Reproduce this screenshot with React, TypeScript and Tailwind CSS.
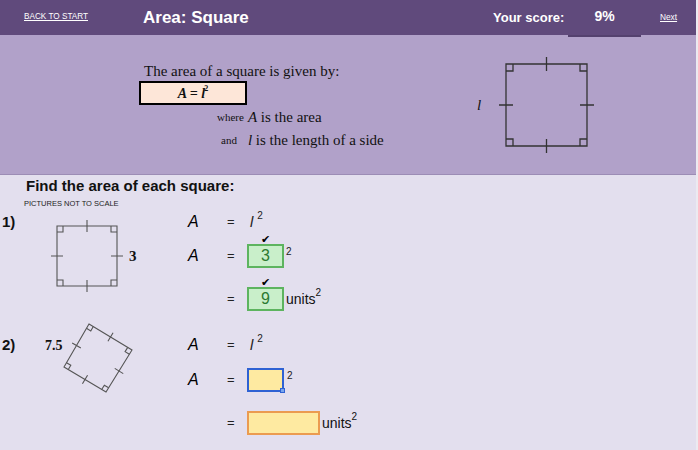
import React from 'react';

type Pt = [number, number];

// square figure with tick marks on each side and right-angle marks in each corner
function SquareFig({ pts, tick, mark, stroke, width }: { pts: Pt[]; tick: number; mark: number; stroke: string; width: number }) {
    const parts: string[] = [];
    pts.forEach((p, i) => {
        const n = pts[(i + 1) % 4];
        const pr = pts[(i + 3) % 4];
        const ux = n[0] - p[0], uy = n[1] - p[1];
        const ul = Math.hypot(ux, uy);
        const vx = pr[0] - p[0], vy = pr[1] - p[1];
        const vl = Math.hypot(vx, vy);
        // side tick
        const mx = (p[0] + n[0]) / 2, my = (p[1] + n[1]) / 2;
        const px = -uy / ul, py = ux / ul;
        parts.push(`M${mx - px * tick},${my - py * tick}L${mx + px * tick},${my + py * tick}`);
        // corner mark
        const a: Pt = [p[0] + (ux / ul) * mark, p[1] + (uy / ul) * mark];
        const b: Pt = [a[0] + (vx / vl) * mark, a[1] + (vy / vl) * mark];
        const c: Pt = [p[0] + (vx / vl) * mark, p[1] + (vy / vl) * mark];
        parts.push(`M${a[0]},${a[1]}L${b[0]},${b[1]}L${c[0]},${c[1]}`);
    });
    return (
        <g fill="none" stroke={stroke} strokeWidth={width}>
            <polygon points={pts.map(p => p.join(',')).join(' ')} />
            <path d={parts.join('')} />
        </g>
    );
}

function Check() {
    return <span className="absolute -top-[12px] left-1/2 -translate-x-1/2 text-[11px] leading-[11px] text-black font-['DejaVu_Sans',sans-serif]">✔</span>;
}

function Row({ children, className = '' }: { children?: React.ReactNode; className?: string }) {
    return <div className={`grid grid-cols-[39px_20px_auto] items-center ${className}`}>{children}</div>;
}

function AItalic() {
    return <span className="italic text-[16px] leading-[20px] text-black">A</span>;
}

function Eq() {
    return <span className="text-[13px] leading-[20px] text-[#222]">=</span>;
}

function LSquared() {
    return (
        <span className="ml-[3px] flex items-start text-[#222]">
            <span className="italic text-[15px] leading-[20px]">l</span>
            <span className="ml-[4px] -mt-[3px] text-[10px] leading-[14px]">2</span>
        </span>
    );
}

function Sup() {
    return <span className="ml-[2px] mt-px text-[10px] leading-[14px] text-[#222]">2</span>;
}

function Units() {
    return (
        <span className="ml-[2px] flex items-start text-[#111]">
            <span className="text-[14px] leading-[24px]">units</span>
            <span className="-mt-[1px] text-[10px] leading-[14px]">2</span>
        </span>
    );
}

export default function App() {
    return (
        <div className="flex w-[698px] h-[450px] overflow-hidden font-['Liberation_Sans',Arial,sans-serif]">
            <div className="flex flex-col w-[696px] h-full">
                {/* header */}
                <div className="flex items-start h-[35px] shrink-0 bg-[#604a7c] text-white">
                    <div className="w-[143px] pl-[24px] h-[35px] flex items-center">
                        <a className="underline text-[8.2px] leading-none">BACK TO START</a>
                    </div>
                    <div className="w-[350px] h-[35px] flex items-center font-bold text-[17px]">Area: Square</div>
                    <div className="w-[75px] h-[35px] flex items-center font-bold text-[13px]">Your score:</div>
                    <div className="relative z-10 w-[73px] h-[37px] bg-[#604a7c] border-b-2 border-[#54416e] flex items-center justify-center pb-[2px] font-bold text-[14px]">9%</div>
                    <div className="pl-[19px] h-[35px] flex items-center">
                        <a className="underline text-[8.3px] leading-none">Next</a>
                    </div>
                </div>

                {/* formula band */}
                <div className="flex h-[140px] shrink-0 bg-[#b1a1c9] border-b border-[#9c8cb5] text-[#111] font-['Liberation_Serif','Times_New_Roman',serif]">
                    <div className="w-[470px] pl-[139px] pt-[27px]">
                        <p className="pl-[5px] text-[15px] leading-[18px]">The area of a square is given by:</p>
                        <div className="mt-px w-[108px] h-[24px] border-2 border-black bg-[#fde6d8] flex items-center justify-center font-bold italic text-[14px]">
                            A = l<sup className="text-[8px] not-italic -ml-[1px]">2</sup>
                        </div>
                        <div className="mt-[3px] ml-[78px] h-[18px] flex items-center">
                            <span className="text-[11px]">where</span>
                            <span className="ml-[4px] text-[15px]"><i>A</i> is the area</span>
                        </div>
                        <div className="mt-[5px] ml-[82px] h-[18px] flex items-center">
                            <span className="text-[11px]">and</span>
                            <span className="ml-[11px] text-[15px]"><i>l</i> is the length of a side</span>
                        </div>
                    </div>
                    <svg width="130" height="139" className="overflow-visible">
                        <text x="7" y="75" className="italic text-[15px]" fill="#111">l</text>
                        <SquareFig pts={[[36, 29], [117, 29], [117, 111], [36, 111]]} tick={7} mark={7} stroke="#333" width={1.3} />
                    </svg>
                </div>

                {/* exercises */}
                <div className="flex-1 bg-[#e3dfee] text-[#111]">
                    <h2 className="mt-[2px] pl-[26px] font-bold text-[15px] leading-[18px]">Find the area of each square:</h2>
                    <p className="mt-[4px] pl-[24px] text-[7.5px] leading-[10px] text-[#222]">PICTURES NOT TO SCALE</p>

                    {/* question 1 */}
                    <div className="mt-[3px] flex items-start">
                        <div className="w-[40px] pl-[2px] font-bold text-[15px] leading-[20px]">1)</div>
                        <svg width="148" height="99" className="overflow-visible">
                            <SquareFig pts={[[17, 14], [77, 14], [77, 74], [17, 74]]} tick={6} mark={6} stroke="#555" width={1.1} />
                            <text x="89" y="49" className="font-['Liberation_Serif',serif] font-bold text-[15px]" fill="#111">3</text>
                        </svg>
                        <div className="flex flex-col">
                            <Row>
                                <AItalic /><Eq /><LSquared />
                            </Row>
                            <Row className="mt-[12px]">
                                <AItalic /><Eq />
                                <div className="flex items-start">
                                    <div className="relative w-[37px] h-[24px] border-2 border-[#5db45f] bg-[#c9efca] flex items-center justify-center text-[16px] text-[#2c7a31]">
                                        3<Check />
                                    </div>
                                    <Sup />
                                </div>
                            </Row>
                            <Row className="mt-[19px]">
                                <span /><Eq />
                                <div className="flex items-start">
                                    <div className="relative w-[37px] h-[24px] border-2 border-[#5db45f] bg-[#c9efca] flex items-center justify-center text-[16px] text-[#2c7a31]">
                                        9<Check />
                                    </div>
                                    <Units />
                                </div>
                            </Row>
                        </div>
                    </div>

                    {/* question 2 */}
                    <div className="mt-[24px] flex items-start">
                        <div className="w-[40px] pl-[2px] font-bold text-[15px] leading-[20px]">2)</div>
                        <svg width="148" height="99" className="overflow-visible">
                            <text x="5" y="15" className="font-['Liberation_Serif',serif] font-bold text-[14px]" fill="#111">7.5</text>
                            <SquareFig pts={[[49, -11], [92, 15], [66, 57], [24, 32]]} tick={5} mark={5} stroke="#555" width={1.1} />
                        </svg>
                        <div className="flex flex-col">
                            <Row>
                                <AItalic /><Eq /><LSquared />
                            </Row>
                            <Row className="mt-[13px]">
                                <AItalic /><Eq />
                                <div className="flex items-start">
                                    <div className="relative w-[37px] h-[24px] border-2 border-[#2f62d3] bg-[#feeaa1]">
                                        <span className="absolute -right-[3px] -bottom-[3px] w-[5px] h-[5px] bg-[#7aa6ee] border border-[#2f62d3]" />
                                    </div>
                                    <span className="ml-[3px] mt-px text-[10px] leading-[14px] text-[#222]">2</span>
                                </div>
                            </Row>
                            <Row className="mt-[19px]">
                                <span /><Eq />
                                <div className="flex items-start">
                                    <div className="w-[73px] h-[24px] border-2 border-[#eb9b50] bg-[#feeaa1]" />
                                    <Units />
                                </div>
                            </Row>
                        </div>
                    </div>
                </div>
            </div>
            <div className="w-[2px] h-full bg-[#eceaf0]" />
        </div>
    );
}
